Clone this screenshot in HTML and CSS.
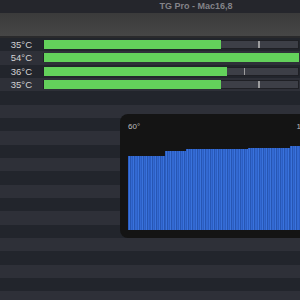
FILE: index.html
```html
<!DOCTYPE html>
<html>
<head>
<meta charset="utf-8">
<link rel="stylesheet" href="styles.css">
</head>
<body>
<div class="window">
  <div class="titlebar"><span class="title">TG Pro - Mac16,8</span></div>
  <div class="toolbar"></div>
  <div class="sep"></div>
  <div class="list">
    <div class="row"><span class="temp">35°C</span><div class="track"><div class="fill" style="width:69.5%"></div><div class="mark" style="left:84%"></div></div></div>
    <div class="row"><span class="temp">54°C</span><div class="track"><div class="fill" style="width:100%"></div></div></div>
    <div class="row"><span class="temp">36°C</span><div class="track"><div class="fill" style="width:72%"></div><div class="mark" style="left:78.5%"></div></div></div>
    <div class="row"><span class="temp">35°C</span><div class="track"><div class="fill" style="width:69.5%"></div><div class="mark" style="left:84%"></div></div></div>
    <div class="row"></div><div class="row"></div><div class="row"></div><div class="row"></div>
    <div class="row"></div><div class="row"></div><div class="row"></div><div class="row"></div>
    <div class="row"></div><div class="row"></div><div class="row"></div><div class="row"></div>
    <div class="row"></div><div class="row"></div><div class="row"></div><div class="row"></div>
  </div>
</div>
<div class="popup">
  <div class="labels"><span>60°</span><span>100°</span></div>
  <div class="chart">
    <div class="seg" style="width:37px;height:74px"></div>
    <div class="seg" style="width:21px;height:79px"></div>
    <div class="seg" style="width:62px;height:81px"></div>
    <div class="seg" style="width:42px;height:82px"></div>
    <div class="seg" style="width:30px;height:84px"></div>
  </div>
</div>
</body>
</html>
```
FILE: styles.css
```css
html, body {
  margin: 0;
  padding: 0;
  width: 300px;
  height: 300px;
  overflow: hidden;
  background: #22252c;
  font-family: "Liberation Sans", Arial, sans-serif;
}
.window {
  display: flex;
  flex-direction: column;
}
.titlebar {
  height: 13px;
  background: #25262c;
  display: flex;
  justify-content: center;
  align-items: center;
  padding-left: 92px;
}
.title {
  font-size: 9px;
  font-weight: bold;
  color: #838388;
  line-height: 10px;
  margin-top: -1px;
}
.toolbar {
  height: 23px;
  background: linear-gradient(#3b3b3b, #464646);
}
.sep {
  height: 2px;
  background: #2a2a2c;
}
.list {
  display: flex;
  flex-direction: column;
}
.row {
  height: 13.333px;
  flex: none;
  display: flex;
  align-items: center;
  background: #22252c;
}
.row:nth-child(even) {
  background: #2e3038;
}
.temp {
  width: 32px;
  text-align: right;
  font-size: 9.5px;
  color: #d2d2d4;
  margin-right: 11px;
}
.track {
  position: relative;
  width: 256px;
  height: 9px;
  background: #3d3f47;
  box-shadow: inset 0 0 0 1px #1f2025;
}
.fill {
  height: 100%;
  background: #63d15b;
  box-shadow: inset 1px 0 0 #1f2025;
}
.mark {
  position: absolute;
  top: 1px;
  width: 1.5px;
  height: 7px;
  background: #9c9c9e;
}
.popup {
  position: absolute;
  left: 120px;
  top: 114px;
  width: 200px;
  height: 124px;
  box-sizing: border-box;
  padding: 8px 0 8px 8px;
  background: #141414;
  border-radius: 8px;
  display: flex;
  flex-direction: column;
}
.labels {
  display: flex;
  justify-content: space-between;
  font-size: 8px;
  color: #bdbdbd;
  line-height: 9px;
  width: 185px;
}
.chart {
  margin-top: auto;
  display: flex;
  align-items: flex-end;
  height: 84px;
}
.seg {
  flex: none;
  background: repeating-linear-gradient(90deg, #2b5ec4 0 1px, #3a73dc 1px 2px, #2756b3 2px 3px, #3369d2 3px 4.3px);
}
```
